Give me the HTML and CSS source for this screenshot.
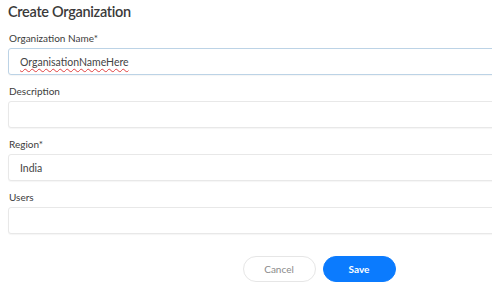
FILE: index.html
```html
<!DOCTYPE html>
<html lang="en">
<head>
  <meta charset="UTF-8" />
  <title>Create Organization</title>
  <link rel="stylesheet" href="styles.css">
</head>
<body>
  <form class="org-form">
    <h2 class="title">Create Organization</h2>

    <div class="field">
      <label>Organization Name*</label>
      <div class="input focused"><span class="misspelled">OrganisationNameHere</span></div>
    </div>

    <div class="field">
      <label>Description</label>
      <div class="input"></div>
    </div>

    <div class="field">
      <label>Region*</label>
      <div class="input"><span>India</span></div>
    </div>

    <div class="field">
      <label>Users</label>
      <div class="input"></div>
    </div>

    <div class="actions">
      <button type="button" class="btn-cancel">Cancel</button>
      <button type="button" class="btn-save">Save</button>
    </div>
  </form>
</body>
</html>
```

FILE: styles.css
```css
/* Reset */
* { margin: 0; padding: 0; box-sizing: border-box; }
body { font-family: 'Lato', 'Liberation Sans', sans-serif; background: #fff; color: #333; overflow: hidden; }

.org-form { width: 622px; margin-left: 8px; padding-top: 2px; }

.title { font-size: 14.5px; font-weight: 600; letter-spacing: -0.3px; color: #3a3a3a; line-height: 20px; margin-bottom: 9px; }

/* Fields */
.field { margin-bottom: 9px; }
.field label { display: block; font-size: 10px; line-height: 14px; color: #3c3c3c; margin-bottom: 3px; padding-left: 1px; }
.input { height: 27px; border: 1px solid #e8e8e8; border-radius: 3px; background: #fff; padding: 0 11px; display: flex; align-items: center; font-size: 10.5px; color: #444; box-shadow: 0 1px 1px rgba(0,0,0,0.04); }
.input.focused { border-color: #bcd3e6; }
.misspelled { text-decoration: underline wavy #e04040; text-decoration-thickness: 1px; text-underline-offset: 2px; }

/* Buttons */
.actions { display: flex; justify-content: center; gap: 7px; margin-top: 22px; }
.actions button { width: 73px; height: 26px; border-radius: 13px; font-family: inherit; font-size: 10px; cursor: pointer; }
.btn-cancel { background: #fff; border: 1px solid #e6e6e6; color: #8a8a8a; }
.btn-save { background: #0b7bfe; border: 1px solid #0b7bfe; color: #fff; font-weight: 700; font-size: 10.5px; }
```
